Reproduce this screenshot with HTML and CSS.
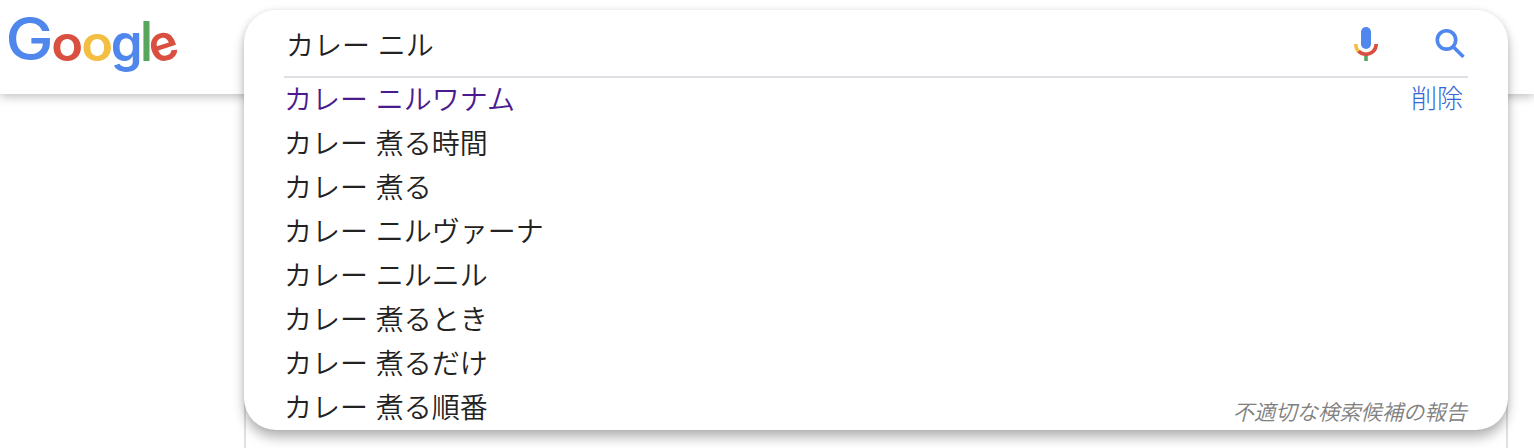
FILE: index.html
```
<!DOCTYPE html>
<html lang="ja">
<head>
  <meta charset="UTF-8">
  <title>カレー ニル - Google 検索</title>
  <link rel="stylesheet" href="styles.css">
</head>
<body>
  <header class="header">
    <svg class="logo" width="200" height="84" viewBox="0 0 200 84" role="img" aria-label="Google">
      <text class="blue cap" transform="translate(5.6 60.2) scale(1.11 1.01)">G</text>
      <text class="red" transform="translate(51.2 60.5) scale(1.07 1.01)">o</text>
      <text class="yellow" transform="translate(81.2 60.5) scale(1.07 1.01)">o</text>
      <text class="blue" transform="translate(110.8 61.2) scale(1.04 1.03)">g</text>
      <text class="green tall" transform="translate(140.2 60.8) scale(.88 1.02)">l</text>
      <text class="red" transform="translate(154 64.2) rotate(-18) scale(1 1.02)">e</text>
    </svg>
  </header>
  <main class="content"></main>

  <form class="search-box">
    <div class="search-bar">
      <span class="query">カレー ニル</span>
      <svg class="mic" width="48" height="48" viewBox="0 0 48 48">
        <rect class="fill-blue" x="19" y="8" width="10" height="22" rx="5"/>
        <path class="fill-green" d="M22.2 35h3.6v7h-3.6z"/>
        <path class="arc stroke-yellow" d="M13.8 25q0 5.2 3.5 8.2"/>
        <path class="arc stroke-red" d="M16.6 32.2C18.6 34.2 21 35.2 24 35.2c5.9 0 10.2-4.4 10.2-10.2"/>
      </svg>
      <svg class="lens" width="30" height="30" viewBox="0 0 30 30">
        <circle cx="11.5" cy="11.9" r="9.2"/>
        <path d="M18 18.4l10.5 10.5"/>
      </svg>
    </div>
    <ul class="suggestions">
      <li class="visited"><span>カレー ニルワナム</span><a class="delete">削除</a></li>
      <li>カレー 煮る時間</li>
      <li>カレー 煮る</li>
      <li>カレー ニルヴァーナ</li>
      <li>カレー ニルニル</li>
      <li>カレー 煮るとき</li>
      <li>カレー 煮るだけ</li>
      <li><span>カレー 煮る順番</span><a class="report">不適切な検索候補の報告</a></li>
    </ul>
  </form>
</body>
</html>
```
FILE: styles.css
```
body {
  margin: 0;
  height: 448px;
  overflow: hidden;
  position: relative;
  background: #fff;
  color: #222;
  font-family: "Liberation Sans", "Noto Sans CJK JP", sans-serif;
  font-weight: 350;
}
.header {
  height: 94px;
  box-shadow: 0 2px 10px rgba(0,0,0,0.28);
}
.logo {
  display: block;
}
.logo text {
  font-family: Inter, sans-serif;
  font-size: 49px;
  font-weight: 600;
}
.logo .cap {
  font-size: 58px;
  font-weight: 500;
}
.logo .tall {
  font-size: 54px;
}
.blue, .fill-blue {
  fill: #4f87ed;
}
.red {
  fill: #d95040;
}
.yellow {
  fill: #f3be42;
}
.green, .fill-green {
  fill: #58a55c;
}
.content {
  box-sizing: border-box;
  height: 354px;
  margin: 0 26px 0 244px;
  border: 2px solid #dfdfe6;
  border-width: 0 2px;
}

/* open search box covers the header and the results */
.search-box {
  position: absolute;
  top: 10px;
  left: 244px;
  right: 26px;
  height: 420px;
  box-sizing: border-box;
  padding: 0 40px;
  border-radius: 32px;
  background: #fff;
  box-shadow: 0 8px 12px rgba(0,0,0,0.27), 0 0 6px rgba(0,0,0,0.1);
}
.search-bar {
  display: flex;
  align-items: center;
  height: 66px;
  border-bottom: 2px solid #dfdfe6;
  font-size: 28px;
}
.query {
  flex: 1;
  padding: 1px 0 0 2px;
}
.mic {
  margin-right: 45px;
}
.arc {
  fill: none;
  stroke-width: 3.6;
}
.stroke-yellow {
  stroke: #f3be42;
}
.stroke-red {
  stroke: #d95040;
}
.lens {
  margin-right: 3px;
  fill: none;
  stroke: #4f87ed;
  stroke-width: 3.6;
}
.suggestions {
  margin: 0;
  padding: 1px 0 0;
  list-style: none;
  font-size: 28px;
}
.suggestions li {
  display: flex;
  justify-content: space-between;
  height: 44px;
  line-height: 44px;
}
.visited {
  color: #4b1b8e;
}
.delete {
  margin: -2px 5px 0 0;
  font-size: 26px;
  font-weight: 300;
  color: #3367d6;
}
.report {
  padding: 4px 1px 0 0;
  font-size: 21.3px;
  font-style: italic;
  color: #808080;
}
```
